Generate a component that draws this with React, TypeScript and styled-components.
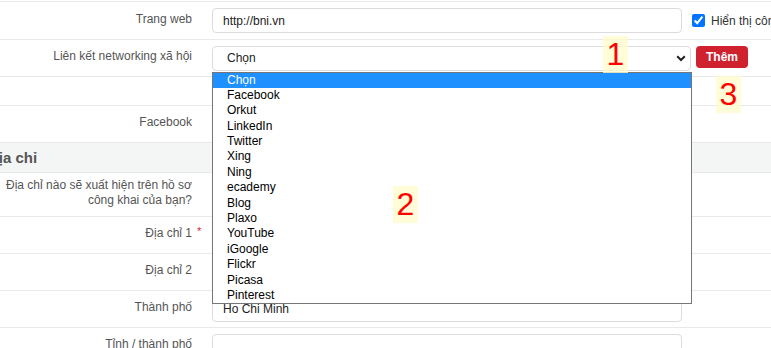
import styled, { createGlobalStyle } from 'styled-components'

const GlobalStyle = createGlobalStyle`
  body {
    margin: 0;
    background: #fff;
    font-family: "Liberation Sans", Arial, sans-serif;
    font-size: 12px;
    overflow: hidden;
  }
`

const Page = styled.div`
  position: relative;
  width: 771px;
  height: 348px;
  overflow: hidden;
  padding-top: 1px;
  box-sizing: border-box;
`

const Row = styled.div<{ $h: number; $noTop?: boolean }>`
  display: flex;
  align-items: center;
  height: ${(p) => p.$h}px;
  box-sizing: border-box;
  border-top: ${(p) => (p.$noTop ? '0' : '1px solid #e9e9e9')};
`

const SectionHeader = styled.div`
  height: 31px;
  box-sizing: border-box;
  border-top: 1px solid #e9e9e9;
  border-bottom: 1px solid #e9e9e9;
  background: #f4f5f5;
  display: flex;
  align-items: center;
`

const SectionTitle = styled.span`
  margin-left: -12px;
  font-size: 15px;
  font-weight: bold;
  color: #555;
`

const Label = styled.div`
  width: 192px;
  flex-shrink: 0;
  text-align: right;
  color: #555;
  line-height: 15px;
  padding-bottom: 3px;
`

const Mark = styled.div`
  width: 20px;
  flex-shrink: 0;
  box-sizing: border-box;
  padding-left: 5px;
  margin-top: -8px;
  color: #e0202f;
  font-size: 11px;
`

const TextInput = styled.div<{ $w?: number }>`
  width: ${(p) => p.$w ?? 470}px;
  height: 25px;
  box-sizing: border-box;
  border: 1px solid #dcdcdc;
  border-radius: 4px;
  padding: 0 10px;
  display: flex;
  align-items: center;
  color: #222;
  flex-shrink: 0;
`

const CheckLabel = styled.label`
  display: flex;
  align-items: center;
  margin-left: 10px;
  white-space: nowrap;
  color: #333;
  input {
    margin: 0 6px 0 0;
    width: 13px;
    height: 13px;
  }
`

const SelectWrap = styled.div`
  position: relative;
  flex-shrink: 0;
`

const SelectBox = styled.div`
  width: 479px;
  height: 25px;
  box-sizing: border-box;
  border: 1px solid #dcdcdc;
  border-radius: 4px;
  padding: 0 4px 0 14px;
  display: flex;
  align-items: center;
  justify-content: space-between;
  color: #222;
`

const DropList = styled.ul`
  position: absolute;
  top: 26px;
  left: 0;
  width: 480px;
  margin: 0;
  padding: 0;
  list-style: none;
  box-sizing: border-box;
  border: 1px solid #767676;
  background: #fff;
  z-index: 5;
`

const DropItem = styled.li<{ $active?: boolean }>`
  height: 15.4px;
  line-height: 14px;
  padding-left: 14px;
  color: ${(p) => (p.$active ? '#fff' : '#000')};
  background: ${(p) => (p.$active ? '#1e90ff' : 'transparent')};
`

const AddButton = styled.button`
  margin-left: 5px;
  margin-bottom: 3px;
  width: 52px;
  height: 22px;
  border: 0;
  border-radius: 4px;
  background: #d0212f;
  color: #fff;
  font-family: inherit;
  font-size: 12px;
  font-weight: bold;
  padding: 0;
`

const Badge = styled.div<{ $x: number; $y: number }>`
  position: absolute;
  left: ${(p) => p.$x}px;
  top: ${(p) => p.$y}px;
  width: 25px;
  height: 37px;
  background: rgba(255, 253, 205, 0.78);
  color: #ff0000;
  font-size: 32px;
  line-height: 37px;
  text-align: center;
  z-index: 10;
`

const networks = [
  'Chọn',
  'Facebook',
  'Orkut',
  'LinkedIn',
  'Twitter',
  'Xing',
  'Ning',
  'ecademy',
  'Blog',
  'Plaxo',
  'YouTube',
  'iGoogle',
  'Flickr',
  'Picasa',
  'Pinterest',
]

const Chevron = () => (
  <svg width="10" height="7" viewBox="0 0 10 7">
    <path d="M1.2 1.2 L5 5 L8.8 1.2" fill="none" stroke="#222" strokeWidth="2" />
  </svg>
)

const App = () => {
  return (
    <>
      <GlobalStyle />
      <Page>
        <Row $h={38}>
          <Label>Trang web</Label>
          <Mark />
          <TextInput>http://bni.vn</TextInput>
          <CheckLabel>
            <input type="checkbox" defaultChecked />
            Hiển thị công khai
          </CheckLabel>
        </Row>
        <Row $h={37}>
          <Label>Liên kết networking xã hội</Label>
          <Mark />
          <SelectWrap>
            <SelectBox>
              <span>Chọn</span>
              <Chevron />
            </SelectBox>
            <DropList>
              {networks.map((n, i) => (
                <DropItem key={n} $active={i === 0}>
                  {n}
                </DropItem>
              ))}
            </DropList>
          </SelectWrap>
          <AddButton>Thêm</AddButton>
        </Row>
        <Row $h={29} />
        <Row $h={37}>
          <Label>Facebook</Label>
          <Mark />
          <TextInput />
        </Row>
        <SectionHeader>
          <SectionTitle>Địa chỉ</SectionTitle>
        </SectionHeader>
        <Row $h={43} $noTop>
          <Label>Địa chỉ nào sẽ xuất hiện trên hồ sơ công khai của bạn?</Label>
        </Row>
        <Row $h={37}>
          <Label>Địa chỉ 1</Label>
          <Mark>*</Mark>
          <TextInput />
        </Row>
        <Row $h={37}>
          <Label>Địa chỉ 2</Label>
          <Mark />
          <TextInput />
        </Row>
        <Row $h={37}>
          <Label>Thành phố</Label>
          <Mark />
          <TextInput>Ho Chi Minh</TextInput>
        </Row>
        <Row $h={37}>
          <Label>Tỉnh / thành phố</Label>
          <Mark />
          <TextInput />
        </Row>
        <Badge $x={603} $y={36}>1</Badge>
        <Badge $x={393} $y={186}>2</Badge>
        <Badge $x={716} $y={76}>3</Badge>
      </Page>
    </>
  )
}

export default App
